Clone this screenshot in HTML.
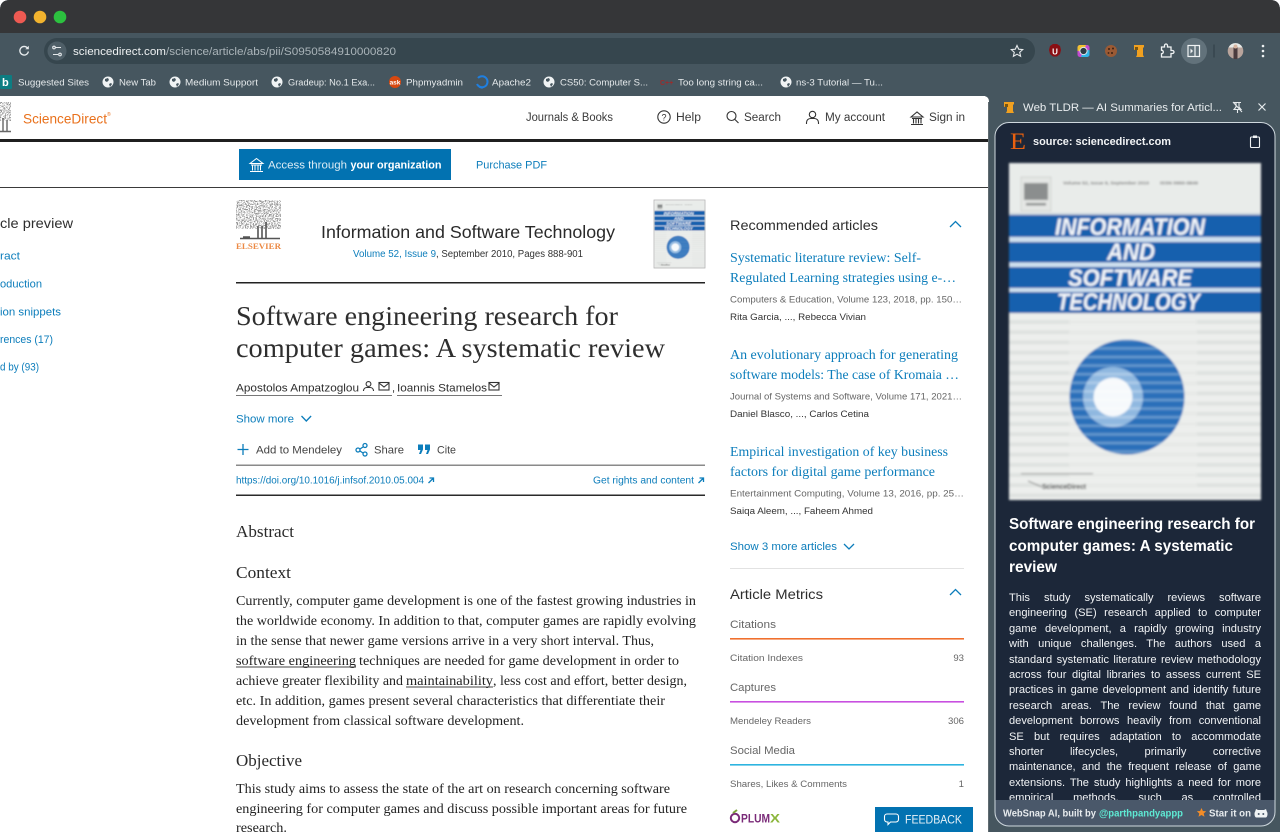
<!DOCTYPE html>
<html lang="en"><head><meta charset="utf-8"><title>ScienceDirect</title>
<style>
html,body{margin:0;padding:0;width:1280px;height:832px;overflow:hidden;background:#fff}
svg{position:absolute;left:0;top:0}
text{font-family:"Liberation Sans",sans-serif;white-space:pre}
.se{font-family:"Liberation Serif",serif}
.bm{font-size:9.6px;fill:#e6eaec}
.nav{font-size:11.5px;fill:#3a3a3a}
.b{fill:#0c7dbb}
.bd{font-family:"Liberation Serif",serif;font-size:14px;fill:#222}
.ra{font-family:"Liberation Serif",serif;font-size:14px;fill:#0c7dbb}
.g{font-size:9.6px;fill:#666}
.d{font-size:9.6px;fill:#333}
.h{font-size:11px;fill:#666}
.ic{fill:none;stroke:#333;stroke-width:1.1}
.ib{fill:none;stroke:#0c7dbb;stroke-width:1.3}
#sum{position:absolute;left:1009px;top:591px;width:252px;height:209px;overflow:hidden;font:11.1px/15.4px "Liberation Sans",sans-serif;color:#f1f3f5}
#sum div{text-align:justify;text-align-last:justify;white-space:normal;height:15.4px}
</style></head><body>
<svg width="1280" height="832" viewBox="0 0 1280 832" xmlns="http://www.w3.org/2000/svg">
<defs>
<filter id="bl" x="-5%" y="-5%" width="110%" height="110%"><feGaussianBlur stdDeviation="1"/></filter>
<filter id="bs" x="-5%" y="-5%" width="110%" height="110%"><feGaussianBlur stdDeviation="0.55"/></filter>
<filter id="noise" x="0" y="0" width="100%" height="100%"><feTurbulence type="fractalNoise" baseFrequency="0.75" numOctaves="2" seed="4" result="n"/><feColorMatrix in="n" type="matrix" values="0 0 0 0 0.3 0 0 0 0 0.3 0 0 0 0 0.3 0 0 0 7 -3.2" result="t"/><feComposite in="t" in2="SourceAlpha" operator="in"/></filter>
<pattern id="st" width="10" height="10.2" patternUnits="userSpaceOnUse"><rect width="10" height="10.2" fill="#edefed"/><rect y="4" width="10" height="4" fill="#dfe2e0"/></pattern>
<pattern id="cs" width="10" height="8.6" patternUnits="userSpaceOnUse"><rect y="3.500" width="10" height="2.600" fill="#fff" opacity=".28"/></pattern>
<clipPath id="cardclip"><rect x="995" y="122" width="280" height="704" rx="14"/></clipPath>
<g id="cover">
<rect width="252" height="337" fill="#e9ecea"/>
<rect x="12" y="14" width="30" height="34" fill="#e4e6e4" stroke="#c8cac8" stroke-width=".7"/>
<rect x="15" y="20" width="24" height="17" fill="#8b8e8e"/>
<rect x="17" y="40" width="20" height="2.500" fill="#8d8f8f"/>
<text x="54" y="21.500" font-size="4.600" font-weight="700" fill="#777" textLength="86" lengthAdjust="spacingAndGlyphs">Volume 52, Issue 9, September 2010</text>
<text x="151" y="21.500" font-size="4.600" font-weight="700" fill="#777" textLength="38" lengthAdjust="spacingAndGlyphs">ISSN 0950-5849</text>
<rect y="150" width="252" height="187" fill="url(#st)"/>
<rect y="50" width="252" height="2" fill="#c7d2dc"/>
<rect y="52" width="252" height="22" fill="#1560ae"/>
<rect y="74" width="252" height="5" fill="#cfe0ef"/>
<rect y="79" width="252" height="20.500" fill="#1560ae"/>
<rect y="99.500" width="252" height="4.500" fill="#cfe0ef"/>
<rect y="104" width="252" height="21" fill="#1560ae"/>
<rect y="125" width="252" height="4" fill="#cfe0ef"/>
<rect y="129" width="252" height="21" fill="#1560ae"/>
<g fill="#f4f7fa" font-size="24" font-weight="700" font-style="italic">
<text x="46" y="72" textLength="150" lengthAdjust="spacingAndGlyphs">INFORMATION</text>
<text x="98" y="97" textLength="48" lengthAdjust="spacingAndGlyphs">AND</text>
<text x="59" y="123" textLength="124" lengthAdjust="spacingAndGlyphs">SOFTWARE</text>
<text x="48" y="147" textLength="143" lengthAdjust="spacingAndGlyphs">TECHNOLOGY</text>
</g>
<rect x="60" y="155" width="128" height="170" fill="#edefed" opacity=".55"/>
<circle cx="118" cy="234" r="57.500" fill="#2a70ba"/>
<circle cx="104" cy="234" r="30" fill="#8fb8e0"/>
<circle cx="104" cy="234" r="19.500" fill="#f6f9fc"/>
<circle cx="118" cy="234" r="57.500" fill="url(#cs)"/>
<rect x="12" y="310" width="72" height="1.500" fill="#777" opacity=".5"/>
<path d="M19 318l14 6" stroke="#888" fill="none"/>
<text x="33" y="326" font-size="7.500" font-weight="700" fill="#333" textLength="44" lengthAdjust="spacingAndGlyphs">ScienceDirect</text>
</g>
</defs>

<!-- chrome -->
<rect width="1280" height="832" fill="#fff"/>
<path d="M0 10Q0 0 10 0H1270Q1280 0 1280 10V96H0Z" fill="#46565f"/>
<path d="M0 10Q0 0 10 0H1270Q1280 0 1280 10V33H0Z" fill="#353638"/>
<circle cx="20" cy="17" r="6.300" fill="#ee5a52"/><circle cx="40" cy="17" r="6.300" fill="#f2b32e"/><circle cx="60" cy="17" r="6.300" fill="#2cc13f"/>
<path d="M27.500 48a4.300 4.300 0 1 0 .9 3.500" fill="none" stroke="#e8ecee" stroke-width="1.300"/><path d="M28.800 45.800v3.500h-3.500z" fill="#e8ecee"/>
<rect x="44" y="38" width="991" height="26" rx="13" fill="#36464e"/>
<circle cx="57" cy="51" r="9.500" fill="#4f5f68"/>
<g stroke="#e6eaec" fill="none" stroke-width="1.100"><path d="M55 47.500h6M53 54.500h5"/><circle cx="54" cy="47.500" r="1.300"/><circle cx="60" cy="54.500" r="1.300"/></g>
<text x="73" y="55" font-size="11" fill="#eef1f2" textLength="93" lengthAdjust="spacingAndGlyphs">sciencedirect.com</text>
<text x="166" y="55" font-size="11" fill="#aab4b9" textLength="230" lengthAdjust="spacingAndGlyphs">/science/article/abs/pii/S0950584910000820</text>
<path d="M1017 45.500l1.700 3.700 4 .4-3 2.700.9 4-3.600-2.100-3.600 2.100.9-4-3-2.700 4-.4z" fill="none" stroke="#e6eaec" stroke-width="1.100"/>
<path d="M1050 46l3-2h4l3 2 1 4-1 4-3 2.500h-4L1050 54l-1-4z" fill="#8a0f14"/><text x="1055" y="54.500" font-size="8" font-weight="700" fill="#fff" text-anchor="middle">U</text>
<rect x="1077.500" y="45" width="12" height="12" rx="2.500" fill="#c34ad0"/><path d="M1077.500 51v-3.500a2.500 2.500 0 0 1 2.500-2.500h6l-2 5z" fill="#f2c230"/><path d="M1089.500 50v4.500a2.500 2.500 0 0 1-2.500 2.500h-6l2-6z" fill="#2fb6e8"/><circle cx="1083.500" cy="51" r="3.600" fill="#2d3a44" stroke="#dfe5e8" stroke-width="1"/>
<circle cx="1111" cy="51" r="6" fill="#9b5a34"/><circle cx="1109" cy="49" r="1" fill="#3b2113"/><circle cx="1113" cy="48.500" r="1" fill="#3b2113"/><circle cx="1112" cy="53" r="1" fill="#3b2113"/><circle cx="1108.500" cy="53" r=".9" fill="#3b2113"/>
<path d="M1134 45h10v2l-1 1v7l1 2h-8l1-2v-6l-3 1z" fill="#f0a020"/><path d="M1135 47h3v3h-3z" fill="#7a5510"/>
<path d="M1161.500 47h3v-1.500a1.500 1.500 0 0 1 3 0V47h3.500v3.500h1.500a1.500 1.500 0 0 1 0 3H1171V57h-9.500v-3.200a1.800 1.800 0 0 0 0-3.600z" fill="none" stroke="#f0f3f4" stroke-width="1.300"/>
<circle cx="1194" cy="51" r="13" fill="#62727b"/><rect x="1188" y="45.500" width="11.500" height="11" fill="none" stroke="#f0f3f4" stroke-width="1.200"/><path d="M1195 45.500v11" stroke="#f0f3f4" stroke-width="1.200"/><path d="M1190.500 48.500l2.500 2.500-2.500 2.500z" fill="#f0f3f4"/>
<path d="M1214 44.500v13" stroke="#2e3c44" stroke-width="1"/>
<circle cx="1235.500" cy="51" r="7.800" fill="#b9a49c"/><path d="M1228.500 47.500a7.800 7.800 0 0 1 14 0z" fill="#e8ebe8"/><rect x="1233.500" y="47" width="4" height="12" fill="#4a3b3e"/><circle cx="1235.500" cy="46.500" r="2" fill="#d7b49f"/>
<circle cx="1263" cy="46" r="1.300" fill="#eef1f2"/><circle cx="1263" cy="51" r="1.300" fill="#eef1f2"/><circle cx="1263" cy="56" r="1.300" fill="#eef1f2"/>

<!-- bookmarks -->
<rect x="0" y="75" width="12" height="14" rx="1" fill="#0d7d82"/><text x="2" y="86" font-size="11" font-weight="700" fill="#fff">b</text>
<g fill="#f0f3f4"><circle cx="108" cy="82" r="5.500"/><circle cx="175" cy="82" r="5.500"/><circle cx="277" cy="82" r="5.500"/><circle cx="549" cy="82" r="5.500"/><circle cx="786" cy="82" r="5.500"/></g>
<g fill="#46565f"><path d="M105 79l3-1 1 2-2 2-2-1zM109 84l2-1 1 1-2 3z"/><path d="M172 79l3-1 1 2-2 2-2-1zM176 84l2-1 1 1-2 3z"/><path d="M274 79l3-1 1 2-2 2-2-1zM278 84l2-1 1 1-2 3z"/><path d="M546 79l3-1 1 2-2 2-2-1zM550 84l2-1 1 1-2 3z"/><path d="M783 79l3-1 1 2-2 2-2-1zM787 84l2-1 1 1-2 3z"/></g>
<circle cx="395" cy="82" r="6" fill="#d8480f"/><text x="395" y="84.500" font-size="6.500" font-weight="700" fill="#fff" text-anchor="middle">ask</text>
<path d="M477 84a5.500 5.500 0 1 0 1-6" fill="none" stroke="#1f7fe0" stroke-width="2"/><path d="M479 87l3 1 2-1" stroke="#1f7fe0" stroke-width="1.500" fill="none"/>
<text x="660" y="85" font-size="7" font-weight="700" fill="#9c2b2b">C++</text>
<text class="bm" x="18" y="85.500" textLength="71" lengthAdjust="spacingAndGlyphs">Suggested Sites</text>
<text class="bm" x="119" y="85.500" textLength="37" lengthAdjust="spacingAndGlyphs">New Tab</text>
<text class="bm" x="185" y="85.500" textLength="73" lengthAdjust="spacingAndGlyphs">Medium Support</text>
<text class="bm" x="288" y="85.500" textLength="87" lengthAdjust="spacingAndGlyphs">Gradeup: No.1 Exa...</text>
<text class="bm" x="406" y="85.500" textLength="57" lengthAdjust="spacingAndGlyphs">Phpmyadmin</text>
<text class="bm" x="492" y="85.500" textLength="39" lengthAdjust="spacingAndGlyphs">Apache2</text>
<text class="bm" x="560" y="85.500" textLength="88" lengthAdjust="spacingAndGlyphs">CS50: Computer S...</text>
<text class="bm" x="678" y="85.500" textLength="85" lengthAdjust="spacingAndGlyphs">Too long string ca...</text>
<text class="bm" x="796" y="85.500" textLength="87" lengthAdjust="spacingAndGlyphs">ns-3 Tutorial — Tu...</text>

<!-- side panel -->
<path d="M985 96H1280V832H985Z" fill="#46565f"/>
<path d="M0 96H983Q989 96 989 102V832H0Z" fill="#fff"/>
<path d="M988.500 102V832" stroke="#39464d" stroke-width=".8"/>

<!-- SD header -->
<rect y="139" width="988" height="3" fill="#1f1f1f"/>
<rect y="187" width="988" height="1" fill="#3a3a3a"/>
<rect x="0" y="102" width="11" height="19" filter="url(#noise)"/><path d="M3 118v13M7 120v11M0 131.500h11" stroke="#666" stroke-width="1.400"/>
<text x="23" y="123.500" font-size="14" fill="#e9711c" textLength="84" lengthAdjust="spacingAndGlyphs">ScienceDirect</text><text x="107" y="116" font-size="5" fill="#e9711c">®</text>
<text class="nav" x="526" y="121" textLength="87" lengthAdjust="spacingAndGlyphs">Journals &amp; Books</text>
<circle class="ic" cx="664" cy="117" r="6.200"/><text x="664" y="120.500" font-size="9" text-anchor="middle" fill="#333">?</text>
<text class="nav" x="676" y="121" textLength="25" lengthAdjust="spacingAndGlyphs">Help</text>
<circle class="ic" cx="731.500" cy="116" r="4.500"/><path class="ic" d="M735 119.500l3.500 3.500"/>
<text class="nav" x="744" y="121" textLength="37" lengthAdjust="spacingAndGlyphs">Search</text>
<circle class="ic" cx="812.500" cy="114.500" r="3.200"/><path class="ic" d="M806.500 124v-1.500a4 4 0 0 1 4-4h4a4 4 0 0 1 4 4v1.500"/>
<text class="nav" x="825" y="121" textLength="60" lengthAdjust="spacingAndGlyphs">My account</text>
<path class="ic" d="M911 117l6-5 6 5zM912 118.500h10M913.500 119v4.500M916 119v4.500M918.500 119v4.500M921 119v4.500M911 124.500h12"/>
<text class="nav" x="929" y="121" textLength="36" lengthAdjust="spacingAndGlyphs">Sign in</text>

<rect x="239" y="149" width="212" height="31" fill="#0272b1"/>
<path d="M250 163.500l6.500-5 6.500 5zM251 165h11M252.500 165.500v5M255 165.500v5M258 165.500v5M260.500 165.500v5M250 171.500h13" fill="none" stroke="#fff" stroke-width="1"/>
<text x="268" y="168.500" font-size="11" fill="#dcecf5" textLength="79" lengthAdjust="spacingAndGlyphs">Access through</text>
<text x="350.500" y="168.500" font-size="11" font-weight="700" fill="#fff" textLength="91" lengthAdjust="spacingAndGlyphs">your organization</text>
<text x="476" y="168.500" font-size="11" class="b" textLength="71" lengthAdjust="spacingAndGlyphs">Purchase PDF</text>

<!-- left nav -->
<text x="0" y="228" font-size="13.500" fill="#2e2e2e" textLength="73" lengthAdjust="spacingAndGlyphs">cle preview</text>
<g font-size="11" class="b">
<text x="0" y="259.500" textLength="20" lengthAdjust="spacingAndGlyphs">ract</text>
<text x="0" y="287.500" textLength="42" lengthAdjust="spacingAndGlyphs">oduction</text>
<text x="0" y="315.500" textLength="61" lengthAdjust="spacingAndGlyphs">ion snippets</text>
<text x="0" y="343" textLength="53" lengthAdjust="spacingAndGlyphs">rences (17)</text>
<text x="0" y="370.500" textLength="39" lengthAdjust="spacingAndGlyphs">d by (93)</text>
</g>

<!-- journal head -->
<rect x="236" y="200" width="45" height="29" filter="url(#noise)"/>
<path d="M258 226v12M266 222v16M262 226v12M250 237h-7M240 238.500h40" stroke="#555" stroke-width="1.600" fill="none"/>
<text class="se" x="236" y="249" font-size="8.500" font-weight="700" fill="#ec8a45" textLength="45" lengthAdjust="spacingAndGlyphs">ELSEVIER</text>
<text x="321" y="238" font-size="17.500" fill="#2a2a2a" textLength="294" lengthAdjust="spacingAndGlyphs">Information and Software Technology</text>
<text class="b" x="353" y="257" font-size="10" textLength="83" lengthAdjust="spacingAndGlyphs">Volume 52, Issue 9</text>
<text x="436" y="257" font-size="10" fill="#333" textLength="147" lengthAdjust="spacingAndGlyphs">, September 2010, Pages 888-901</text>
<g filter="url(#bs)"><use href="#cover" transform="translate(654.500 200.500) scale(.2 .2)"/></g>
<rect x="654" y="200" width="51" height="68" fill="none" stroke="#b5b5b5" stroke-width=".8"/>
<rect x="236" y="282" width="469" height="1.500" fill="#222"/>

<!-- article title -->
<text class="se" x="236" y="325" font-size="27" fill="#2e2e2e" textLength="382" lengthAdjust="spacingAndGlyphs">Software engineering research for</text>
<text class="se" x="236" y="357" font-size="27" fill="#2e2e2e" textLength="429" lengthAdjust="spacingAndGlyphs">computer games: A systematic review</text>

<text x="236" y="391.500" font-size="11" fill="#2e2e2e" textLength="123" lengthAdjust="spacingAndGlyphs">Apostolos Ampatzoglou</text>
<circle cx="368.500" cy="384" r="2.400" class="ic" stroke-width=".9"/><path class="ic" d="M363.500 391v-.5a3.500 3.500 0 0 1 3.500-3h3a3.500 3.500 0 0 1 3.500 3v.5"/>
<rect x="379" y="382.500" width="10" height="7.500" class="ic"/><path class="ic" d="M379 383l5 4 5-4"/>
<text x="392" y="391.500" font-size="11" fill="#2e2e2e">,</text>
<text x="397" y="391.500" font-size="11" fill="#2e2e2e" textLength="90" lengthAdjust="spacingAndGlyphs">Ioannis Stamelos</text>
<rect x="489" y="382.500" width="10" height="7.500" class="ic"/><path class="ic" d="M489 383l5 4 5-4"/>
<path d="M236 395.500h156M397 395.500h105" stroke="#777" stroke-width="1"/>

<text class="b" x="236" y="422.500" font-size="11" textLength="58" lengthAdjust="spacingAndGlyphs">Show more</text>
<path class="ib" d="M301.500 416l4.800 5 4.800-5"/>

<path class="ib" d="M243 444v11M237.500 449.500h11"/>
<text x="256" y="453.500" font-size="11" fill="#444" textLength="86" lengthAdjust="spacingAndGlyphs">Add to Mendeley</text>
<g class="ib"><circle cx="358" cy="450" r="2"/><circle cx="365" cy="445.500" r="2"/><circle cx="365" cy="454" r="2"/><path d="M360 449l3-2M360 451l3 2"/></g>
<text x="374" y="453.500" font-size="11" fill="#444" textLength="30" lengthAdjust="spacingAndGlyphs">Share</text>
<path d="M418 444.500h5v5l-2 4.500h-2l1.500-4H418zM425 444.500h5v5l-2 4.500h-2l1.500-4H425z" fill="#0c7dbb"/>
<text x="437" y="453.500" font-size="11" fill="#444" textLength="19" lengthAdjust="spacingAndGlyphs">Cite</text>
<rect x="236" y="464.500" width="469" height="1.500" fill="#8a8a8a"/>
<g font-size="10" class="b">
<text x="236" y="483.500" textLength="188" lengthAdjust="spacingAndGlyphs">https://doi.org/10.1016/j.infsof.2010.05.004</text>
<text x="593" y="483.500" textLength="101" lengthAdjust="spacingAndGlyphs">Get rights and content</text>
</g>
<path class="ib" stroke-width="1" d="M428.500 483l5-5M429.500 478h4v4M698.500 483l5-5M699.500 478h4v4"/>
<rect x="236" y="494.500" width="469" height="1.500" fill="#2a2a2a"/>

<!-- abstract -->
<g class="se" fill="#2a2a2a" font-size="16.500">
<text class="se" x="236" y="537" textLength="58" lengthAdjust="spacingAndGlyphs">Abstract</text>
<text class="se" x="236" y="578" textLength="55" lengthAdjust="spacingAndGlyphs">Context</text>
<text class="se" x="236" y="766" textLength="66" lengthAdjust="spacingAndGlyphs">Objective</text>
</g>
<text class="bd" x="236" y="605" textLength="460" lengthAdjust="spacingAndGlyphs">Currently, computer game development is one of the fastest growing industries in</text>
<text class="bd" x="236" y="625" textLength="460" lengthAdjust="spacingAndGlyphs">the worldwide economy. In addition to that, computer games are rapidly evolving</text>
<text class="bd" x="236" y="645" textLength="418" lengthAdjust="spacingAndGlyphs">in the sense that newer game versions arrive in a very short interval. Thus,</text>
<text class="bd" x="236" y="665" textLength="120" lengthAdjust="spacingAndGlyphs">software engineering</text>
<text class="bd" x="359" y="665" textLength="320" lengthAdjust="spacingAndGlyphs">techniques are needed for game development in order to</text>
<text class="bd" x="236" y="685" textLength="167" lengthAdjust="spacingAndGlyphs">achieve greater flexibility and</text>
<text class="bd" x="406" y="685" textLength="87" lengthAdjust="spacingAndGlyphs">maintainability</text>
<text class="bd" x="493" y="685" textLength="194" lengthAdjust="spacingAndGlyphs">, less cost and effort, better design,</text>
<text class="bd" x="236" y="705" textLength="429" lengthAdjust="spacingAndGlyphs">etc. In addition, games present several characteristics that differentiate their</text>
<text class="bd" x="236" y="725" textLength="288" lengthAdjust="spacingAndGlyphs">development from classical software development.</text>
<path d="M236 667h120M406 687h87" stroke="#444" stroke-width=".9"/>
<text class="bd" x="236" y="793" textLength="434" lengthAdjust="spacingAndGlyphs">This study aims to assess the state of the art on research concerning software</text>
<text class="bd" x="236" y="813" textLength="451" lengthAdjust="spacingAndGlyphs">engineering for computer games and discuss possible important areas for future</text>
<text class="bd" x="236" y="832" textLength="51" lengthAdjust="spacingAndGlyphs">research.</text>

<!-- right column -->
<text x="730" y="230" font-size="14" fill="#2e2e2e" textLength="148" lengthAdjust="spacingAndGlyphs">Recommended articles</text>
<path class="ib" d="M950 227l5.500-5.500 5.500 5.500"/>
<text class="ra" x="730" y="262" textLength="191" lengthAdjust="spacingAndGlyphs">Systematic literature review: Self-</text>
<text class="ra" x="730" y="282" textLength="226" lengthAdjust="spacingAndGlyphs">Regulated Learning strategies using e-…</text>
<text class="g" x="730" y="302.500" textLength="232" lengthAdjust="spacingAndGlyphs">Computers &amp; Education, Volume 123, 2018, pp. 150…</text>
<text class="d" x="730" y="320" textLength="136" lengthAdjust="spacingAndGlyphs">Rita Garcia, ..., Rebecca Vivian</text>
<text class="ra" x="730" y="359" textLength="228" lengthAdjust="spacingAndGlyphs">An evolutionary approach for generating</text>
<text class="ra" x="730" y="379" textLength="229" lengthAdjust="spacingAndGlyphs">software models: The case of Kromaia …</text>
<text class="g" x="730" y="399.500" textLength="232" lengthAdjust="spacingAndGlyphs">Journal of Systems and Software, Volume 171, 2021…</text>
<text class="d" x="730" y="417" textLength="139" lengthAdjust="spacingAndGlyphs">Daniel Blasco, ..., Carlos Cetina</text>
<text class="ra" x="730" y="456" textLength="218" lengthAdjust="spacingAndGlyphs">Empirical investigation of key business</text>
<text class="ra" x="730" y="476" textLength="205" lengthAdjust="spacingAndGlyphs">factors for digital game performance</text>
<text class="g" x="730" y="496.500" textLength="234" lengthAdjust="spacingAndGlyphs">Entertainment Computing, Volume 13, 2016, pp. 25…</text>
<text class="d" x="730" y="514" textLength="143" lengthAdjust="spacingAndGlyphs">Saiqa Aleem, ..., Faheem Ahmed</text>
<text class="b" x="730" y="550" font-size="11" textLength="107" lengthAdjust="spacingAndGlyphs">Show 3 more articles</text>
<path class="ib" d="M844 544l5 5 5-5"/>
<rect x="730" y="568" width="234" height="1" fill="#e2e2e2"/>
<text x="730" y="599" font-size="14" fill="#2e2e2e" textLength="93" lengthAdjust="spacingAndGlyphs">Article Metrics</text>
<path class="ib" d="M950 595l5.500-5.500 5.500 5.500"/>
<text class="h" x="730" y="628" textLength="46" lengthAdjust="spacingAndGlyphs">Citations</text>
<rect x="730" y="638" width="234" height="1.600" fill="#f0702e"/>
<text class="g" x="730" y="661" textLength="73" lengthAdjust="spacingAndGlyphs">Citation Indexes</text><text class="g" x="964" y="661" text-anchor="end">93</text>
<text class="h" x="730" y="691" textLength="46" lengthAdjust="spacingAndGlyphs">Captures</text>
<rect x="730" y="701" width="234" height="1.600" fill="#c84fe0"/>
<text class="g" x="730" y="724" textLength="81" lengthAdjust="spacingAndGlyphs">Mendeley Readers</text><text class="g" x="964" y="724" text-anchor="end">306</text>
<text class="h" x="730" y="754" textLength="65" lengthAdjust="spacingAndGlyphs">Social Media</text>
<rect x="730" y="764" width="234" height="1.600" fill="#2db4e0"/>
<text class="g" x="730" y="787" textLength="117" lengthAdjust="spacingAndGlyphs">Shares, Likes &amp; Comments</text><text class="g" x="964" y="787" text-anchor="end">1</text>
<circle cx="735" cy="818" r="4.200" fill="none" stroke="#7a2a78" stroke-width="2"/><path d="M733 813l4-3" stroke="#7ba33a" stroke-width="2"/>
<text x="741" y="822.500" font-size="12" font-weight="700" fill="#7a2a78" textLength="29" lengthAdjust="spacingAndGlyphs">PLUM</text><text x="770" y="822.500" font-size="12" font-weight="700" fill="#8cb63c" textLength="10" lengthAdjust="spacingAndGlyphs">X</text>
<rect x="875" y="807" width="98" height="25" fill="#0272b1"/>
<path d="M887 814h9a2.500 2.500 0 0 1 2.500 2.500v3a2.500 2.500 0 0 1-2.500 2.500h-5.500l-2.500 2.500V822h-1a2.500 2.500 0 0 1-2.500-2.500v-3A2.500 2.500 0 0 1 887 814z" fill="none" stroke="#fff" stroke-width="1.100"/>
<text x="905" y="823.500" font-size="11.500" fill="#e8f2f8" textLength="57" lengthAdjust="spacingAndGlyphs">FEEDBACK</text>

<!-- sidepanel header -->
<path d="M1004 102h10v2l-1 1v6l1 2h-8l1-2v-5l-3 1z" fill="#f0a020"/><path d="M1005 104h3v3h-3z" fill="#7a5510"/>
<text x="1023" y="111" font-size="11" fill="#e9edef" textLength="199" lengthAdjust="spacingAndGlyphs">Web TLDR — AI Summaries for Articl...</text>
<path d="M1234 102.500h7M1236 103v4l-2 2.500h7l-2-2.500v-4M1237.500 110v3M1233 102l9 10" fill="none" stroke="#e6eaec" stroke-width="1.100"/>
<path d="M1258.500 103.500l7 7M1265.500 103.500l-7 7" stroke="#e6eaec" stroke-width="1.200"/>

<!-- card -->
<rect x="995" y="122" width="280" height="704" rx="14" fill="#1c2739"/>
<text class="se" x="1010" y="149" font-size="23" fill="#e8600f" textLength="16" lengthAdjust="spacingAndGlyphs">E</text>
<text x="1033" y="145" font-size="11" font-weight="700" fill="#f1f3f5" textLength="138" lengthAdjust="spacingAndGlyphs">source: sciencedirect.com</text>
<rect x="1250.500" y="137" width="9" height="10.500" rx="1" fill="none" stroke="#f0f3f4" stroke-width="1.100"/><rect x="1253" y="135.500" width="4" height="2.500" fill="#f0f3f4"/>
<g filter="url(#bl)"><use href="#cover" transform="translate(1009 163)"/></g>
<g font-size="15.500" font-weight="700" fill="#fff">
<text x="1009" y="529" textLength="246" lengthAdjust="spacingAndGlyphs">Software engineering research for</text>
<text x="1009" y="551" textLength="224" lengthAdjust="spacingAndGlyphs">computer games: A systematic</text>
<text x="1009" y="572" textLength="48" lengthAdjust="spacingAndGlyphs">review</text>
</g>
</svg>

<div id="sum">
<div>This study systematically reviews software</div>
<div>engineering (SE) research applied to computer</div>
<div>game development, a rapidly growing industry</div>
<div>with unique challenges. The authors used a</div>
<div>standard systematic literature review methodology</div>
<div>across four digital libraries to assess current SE</div>
<div>practices in game development and identify future</div>
<div>research areas. The review found that game</div>
<div>development borrows heavily from conventional</div>
<div>SE but requires adaptation to accommodate</div>
<div>shorter lifecycles, primarily corrective</div>
<div>maintenance, and the frequent release of game</div>
<div>extensions. The study highlights a need for more</div>
<div>empirical methods, such as controlled</div>
</div>

<svg width="1280" height="832" viewBox="0 0 1280 832" xmlns="http://www.w3.org/2000/svg" style="pointer-events:none">
<clipPath id="cardclip2"><rect x="995" y="122" width="280" height="704" rx="14"/></clipPath>
<g clip-path="url(#cardclip2)">
<rect x="995" y="800" width="280" height="26" fill="#4a586a"/>
</g>
<rect x="995" y="122.500" width="280" height="703.500" rx="14" fill="none" stroke="#cfd8de" stroke-width="1"/>
<text x="1003" y="816.500" font-size="10" font-weight="700" fill="#e7ebee" textLength="93" lengthAdjust="spacingAndGlyphs">WebSnap AI, built by</text>
<text x="1099" y="816.500" font-size="10" font-weight="700" fill="#5eead4" textLength="84" lengthAdjust="spacingAndGlyphs">@parthpandyappp</text>
<path d="M1201.500 808l1.400 3 3.300.3-2.500 2.200.8 3.200-3-1.700-3 1.700.8-3.200-2.500-2.200 3.300-.3z" fill="#f28c28"/>
<text x="1209" y="816.500" font-size="10" font-weight="700" fill="#e7ebee" textLength="42" lengthAdjust="spacingAndGlyphs">Star it on</text>
<path d="M1256 809l2 1h6l2-1 .8 2.500c.5.700.7 1.500.7 2.500 0 1.500-.5 3-1.500 3.500h-10c-1-.5-1.500-2-1.500-3.500 0-1 .2-1.800.7-2.500z" fill="#f0f3f4"/>
<circle cx="1258.700" cy="814" r="1" fill="#4a586a"/><circle cx="1263.300" cy="814" r="1" fill="#4a586a"/>
</svg>
</body></html>
